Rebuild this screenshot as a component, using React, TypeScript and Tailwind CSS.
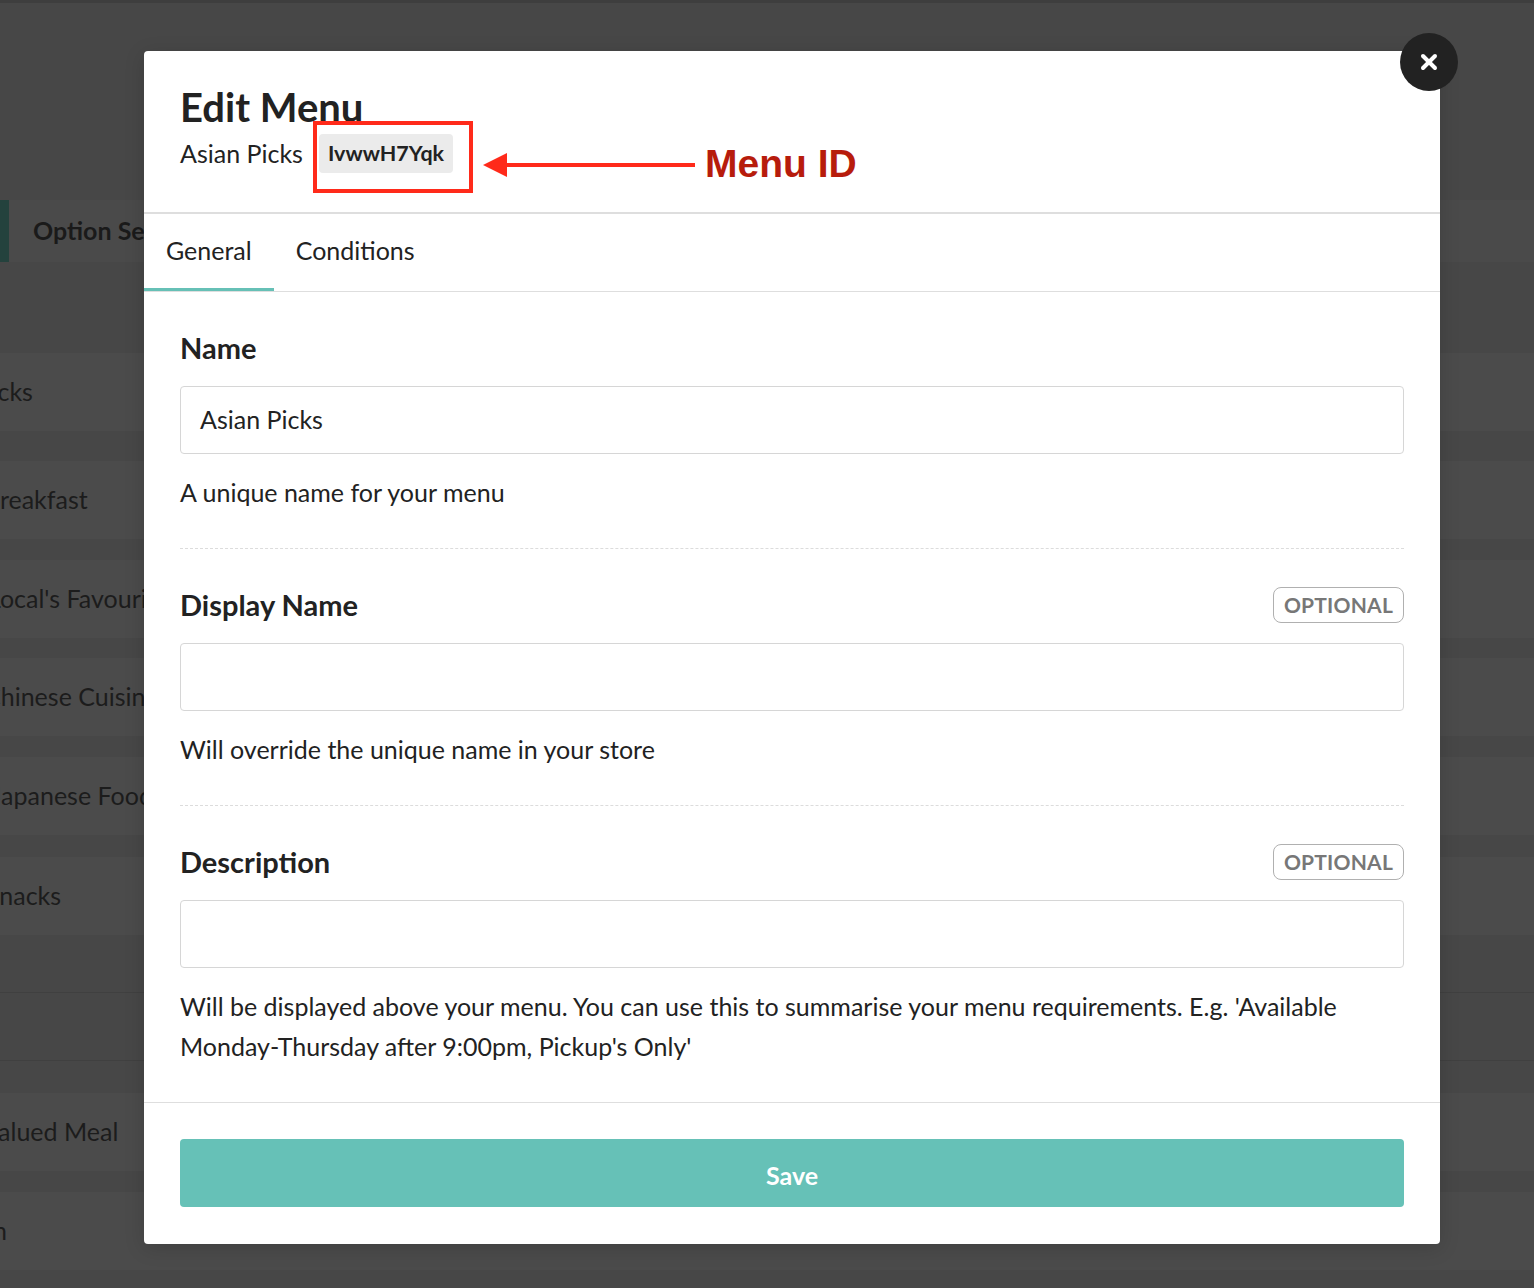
import React from "react";
import { X } from "lucide-react";

const font = { fontFamily: "Lato, 'Open Sans', sans-serif" };

function BgRow({ text, ml, mt }: { text: string; ml: string; mt: string }) {
  return (
    <div className={`h-[78px] bg-[#4b4b4b] flex items-center overflow-hidden ${mt}`}>
      <span className={`text-[25px] text-[#1c1c1c] whitespace-nowrap ${ml}`}>{text}</span>
    </div>
  );
}

function Field({
  label,
  optional,
  value,
  help,
  first,
}: {
  label: string;
  optional?: boolean;
  value?: string;
  help: React.ReactNode;
  first?: boolean;
}) {
  return (
    <div className={`${first ? "pt-[38px]" : "pt-[38px] border-t border-dashed border-[#dcdcdc]"} pb-[36px]`}>
      <div className="h-9 flex items-center justify-between">
        <div className="text-[29px] font-bold text-[#222]">{label}</div>
        {optional && (
          <div className="h-9 px-[10px] border border-[#b0b0b0] rounded-[8px] flex items-center text-[21px] font-bold text-[#777] tracking-[0.2px]">
            OPTIONAL
          </div>
        )}
      </div>
      <div className="mt-5 h-[68px] border border-[#d6d6d6] rounded-[4px] flex items-center px-[19px] text-[25px] text-[#222]">
        {value}
      </div>
      <div className="mt-[18px] text-[25px] leading-[40px] text-[#222]">{help}</div>
    </div>
  );
}

export default function App() {
  return (
    <div className="relative w-[1534px] h-[1288px] bg-[#474747] overflow-hidden" style={font}>
      {/* background page under overlay */}
      <div className="flex flex-col">
        <div className="h-[3px] bg-[#3e3e3e]" />
        <div className="mt-[197px] h-[62px] bg-[#4a4a4a] flex items-center">
          <div className="w-[9px] h-full bg-[#24423d]" />
          <span className="ml-6 text-[25px] font-bold text-[#1a1a1a] whitespace-nowrap">Option Sets</span>
        </div>
        <BgRow mt="mt-[91px]" ml="ml-[-90px]" text="Asian Picks" />
        <BgRow mt="mt-[30px]" ml="ml-[-16px]" text="Breakfast" />
        <BgRow mt="mt-[21px]" ml="ml-[-12px]" text="Local's Favourite" />
        <BgRow mt="mt-[20px]" ml="ml-[-16px]" text="Chinese Cuisine" />
        <BgRow mt="mt-[21px]" ml="ml-[-9px]" text="Japanese Food" />
        <BgRow mt="mt-[22px]" ml="ml-[-14px]" text="Snacks" />
        <div className="mt-[57px] h-px bg-[#404040]" />
        <div className="mt-[67px] h-px bg-[#404040]" />
        <BgRow mt="mt-[32px]" ml="ml-[-17px]" text="Valued Meal" />
        <BgRow mt="mt-[21px]" ml="ml-[-7px]" text="n" />
      </div>

      {/* modal */}
      <div className="absolute left-[144px] top-[51px] w-[1296px] bg-white rounded-[4px] shadow-[0_4px_20px_rgba(0,0,0,0.15)]">
        {/* header */}
        <div className="relative px-9 pt-8 pb-[39px] border-b-2 border-[#dedede]">
          <div className="text-[40px] leading-[48px] font-bold text-[#222]">Edit Menu</div>
          <div className="mt-[3px] flex items-center">
            <span className="text-[25px] text-[#222]">Asian Picks</span>
            <span className="ml-4 h-[39px] px-[9px] bg-[#ebebeb] rounded-[4px] flex items-center text-[21.5px] font-bold text-[#222]">
              IvwwH7Yqk
            </span>
          </div>
          {/* annotation */}
          <div className="absolute left-[169px] top-[70px] w-[160px] h-[72px] border-4 border-[#ff2a1a]" />
          <svg className="absolute left-[337px] top-[100px]" width="216" height="30" viewBox="0 0 216 30">
            <line x1="20" y1="14" x2="214" y2="14" stroke="#ff2a1a" strokeWidth="4" />
            <polygon points="2,14 26,2 26,26" fill="#ff2a1a" />
          </svg>
          <div
            className="absolute left-[561px] top-[88px] text-[39px] leading-[50px] font-bold text-[#b71c0c]"
            style={{ fontFamily: "'Liberation Sans', Arial, sans-serif" }}
          >
            Menu ID
          </div>
        </div>

        {/* tabs */}
        <div className="flex h-[78px] border-b border-[#dedede]">
          <div className="relative px-[22px] pb-[3px] flex items-center text-[25px] text-[#222]">
            General
            <div className="absolute left-0 right-0 bottom-0 h-[3px] bg-[#66c0b6]" />
          </div>
          <div className="px-[22px] pb-[3px] flex items-center text-[25px] text-[#222]">Conditions</div>
        </div>

        {/* body */}
        <div className="px-9">
          <Field first label="Name" value="Asian Picks" help="A unique name for your menu" />
          <Field label="Display Name" optional help="Will override the unique name in your store" />
          <Field
            label="Description"
            optional
            help="Will be displayed above your menu. You can use this to summarise your menu requirements. E.g. 'Available Monday-Thursday after 9:00pm, Pickup's Only'"
          />
        </div>

        {/* footer */}
        <div className="border-t border-[#dedede] px-9 pt-9 pb-[37px]">
          <div className="h-[68px] pt-[6px] bg-[#66c1b7] rounded-[4px] flex items-center justify-center text-[25px] font-bold text-white">
            Save
          </div>
        </div>
      </div>

      {/* close button */}
      <div className="absolute left-[1400px] top-[33px] w-[58px] h-[58px] rounded-full bg-[#222] flex items-center justify-center">
        <X size={24} strokeWidth={4} color="#fff" />
      </div>
    </div>
  );
}
